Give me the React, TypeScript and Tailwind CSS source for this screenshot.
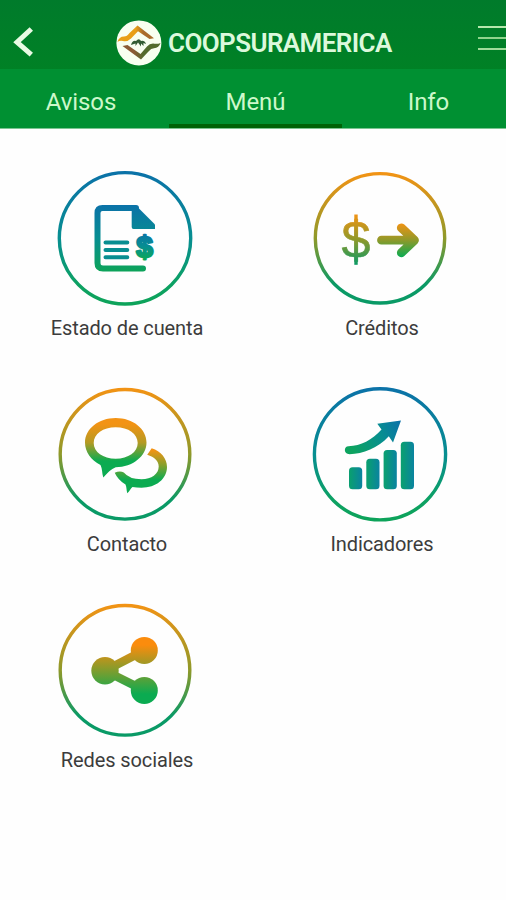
import type { ReactNode } from 'react'

const ORANGE = '#f39314'
const OLIVE = '#8f992a'
const GREEN = '#0bab51'
const BLUE = '#0b72a8'
const TEAL = '#078e91'

type RingProps = {
    id: string
    warm?: boolean
    r?: number
    children: ReactNode
}

const Ring = ({ id, warm = false, r = 65, children }: RingProps) => (
    <svg className="w-[136px] h-[136px] mr-1" viewBox="0 0 136 136" fill="none">
        <defs>
            <linearGradient id={id} gradientUnits="userSpaceOnUse" x1="0" y1="2" x2="0" y2="134">
                <stop offset="0" stopColor={warm ? ORANGE : BLUE} />
                <stop offset="0.5" stopColor={warm ? OLIVE : TEAL} />
                <stop offset="0.85" stopColor={warm ? '#0a9a66' : '#0da163'} />
                <stop offset="1" stopColor={warm ? '#0a9a66' : '#0da35a'} />
            </linearGradient>
        </defs>
        <circle cx="68" cy="68.3" r={r} stroke={`url(#${id})`} strokeWidth="3.4" />
        {children}
    </svg>
)

type FadeProps = { id: string; from: string; mid: string; to: string; y1: number; y2: number }

const Fade = ({ id, from, mid, to, y1, y2 }: FadeProps) => (
    <linearGradient id={id} gradientUnits="userSpaceOnUse" x1="0" y1={y1} x2="0" y2={y2}>
        <stop offset="0" stopColor={from} />
        <stop offset="0.5" stopColor={mid} />
        <stop offset="1" stopColor={to} />
    </linearGradient>
)

const AccountIcon = () => (
    <Ring id="ring-account" r={65.7}>
        <Fade id="doc" from={BLUE} mid={TEAL} to="#0da35a" y1={35} y2={101} />
        <Fade id="doc-cash" from={BLUE} mid={TEAL} to={GREEN} y1={62} y2={91} />
        <path
            d="M79 38H45.500Q40.500 38 40.500 43V93Q40.500 98.500 46 98.500H86"
            stroke="url(#doc)"
            strokeWidth="6"
            strokeLinecap="round"
        />
        <path d="M74.700 35H78.500L98 54.500V59H76.500Q74.700 59 74.700 57Z" fill="url(#doc)" />
        <path d="M48.500 72.500H70.300M48.500 79.900H70.300M48.500 87.200H70.300" stroke={TEAL} strokeWidth="4" strokeLinecap="round" />
        <text
            x="87.500"
            y="86.700"
            textAnchor="middle"
            className="font-['Liberation_Sans',sans-serif] font-bold text-[30px]"
            fill="url(#doc-cash)"
            stroke="url(#doc-cash)"
            strokeWidth="2.400"
            strokeLinejoin="round"
        >
            $
        </text>
    </Ring>
)

const CreditIcon = () => (
    <Ring id="ring-credit" warm r={64.7}>
        <Fade id="credit-cash" from={ORANGE} mid={OLIVE} to="#0a9a66" y1={44} y2={95} />
        <Fade id="credit-arrow" from={ORANGE} mid={OLIVE} to={GREEN} y1={53} y2={87} />
        <text
            x="44"
            y="87.500"
            textAnchor="middle"
            className="font-['Liberation_Sans',sans-serif] text-[52px]"
            fill="url(#credit-cash)"
            stroke="url(#credit-cash)"
            strokeWidth="0.600"
        >
            $
        </text>
        <path d="M44 44.500V94.800" stroke="url(#credit-cash)" strokeWidth="3.400" />
        <path
            d="M69.500 70.200H98M89.300 57.800L102.500 70.200L89.300 82.800"
            stroke="url(#credit-arrow)"
            strokeWidth="8.800"
            strokeLinecap="round"
            strokeLinejoin="round"
        />
    </Ring>
)

const ContactIcon = () => (
    <Ring id="ring-contact" warm r={64.8}>
        <Fade id="bubble-big" from={ORANGE} mid="#b59a23" to={GREEN} y1={38} y2={75} />
        <Fade id="bubble-small" from={ORANGE} mid="#87a02c" to={GREEN} y1={64} y2={94} />
        <path
            fillRule="evenodd"
            fill="url(#bubble-big)"
            d="M58.700 32C76 32 89.500 43 89.500 56.500S76 81 58.700 81.300C54 83 50.500 87 46.300 91.500C44.800 87 45.500 83 43.500 79C34 74 28 66 28 56.500C28 43 41.500 32 58.700 32ZM58.700 41.300C46 41.300 36.700 48 36.700 57S46 72.700 58.700 72.700S80.700 66 80.700 57S71.500 41.300 58.700 41.300Z"
        />
        <path
            fill="url(#bubble-small)"
            d="M94.700 62.300C104 65.500 110 72.500 110 81C110 93 99 101.700 84.500 101.700Q79.500 101.700 75.500 101C73.500 102.500 73 105 70.300 107.200C69.300 104 69.700 101 68.500 98.500Q61 94 57.700 86.700Q63 84.500 66.800 86.500Q72.500 93.300 84.500 93.300C94.500 93.300 101.700 88 101.700 80.500C101.700 75 97.500 71.300 90.200 68.800Z"
        />
    </Ring>
)

const BARS = [
    { x: 37, top: 81.3 },
    { x: 54.3, top: 72.7 },
    { x: 71.6, top: 64 },
    { x: 88.8, top: 55.7 },
]

const IndicatorsIcon = () => (
    <Ring id="ring-indicators" r={65.6}>
        <linearGradient id="bar" x1="0" y1="0" x2="1" y2="0">
            <stop offset="0.1" stopColor="#0a9e72" />
            <stop offset="1" stopColor="#0a83a0" />
        </linearGradient>
        <linearGradient id="trend" gradientUnits="userSpaceOnUse" x1="38" y1="60" x2="88" y2="36">
            <stop offset="0" stopColor="#0da35f" />
            <stop offset="0.6" stopColor="#078e91" />
            <stop offset="1" stopColor={BLUE} />
        </linearGradient>
        {BARS.map((bar) => (
            <rect key={bar.x} x={bar.x} y={bar.top} width="13.200" height={103.300 - bar.top} rx="3.500" fill="url(#bar)" />
        ))}
        <path
            fill="url(#trend)"
            d="M36.500 60.200C49 60 60 54 69.500 43.500L65.300 37.800L89 34.500L81 56.500L76.800 50.300C66 62 51 68.200 37.500 68.200C31.500 68 31.500 60.200 36.500 60.200Z"
        />
    </Ring>
)

const ShareIcon = () => (
    <Ring id="ring-share" warm r={64.8}>
        <Fade id="share" from="#fb8c0d" mid="#849c2c" to={GREEN} y1={43} y2={92} />
        <g fill="url(#share)">
            <circle cx="87.300" cy="48.400" r="13.500" />
            <circle cx="48" cy="68.700" r="13.700" />
            <circle cx="87.300" cy="88.400" r="13.500" />
        </g>
        <path d="M87.300 48.400L48 68.700L87.300 88.400" stroke="url(#share)" strokeWidth="8.500" />
    </Ring>
)

const Logo = () => (
    <svg className="w-[46px] h-[46px] shrink-0" viewBox="0 0 46 46">
        <defs>
            <linearGradient id="logo-roof" x1="0" x2="1">
                <stop offset="0.5" stopColor="#e99f16" />
                <stop offset="0.7" stopColor="#a96b2b" />
            </linearGradient>
            <linearGradient id="logo-base" x1="0" x2="1">
                <stop offset="0.3" stopColor="#8b5b35" />
                <stop offset="0.55" stopColor="#526b2c" />
            </linearGradient>
        </defs>
        <circle cx="22.900" cy="22.900" r="22.500" fill="#f8fff0" />
        <path d="M1.500 22Q3 16.500 8 16.500Q11 16.500 13.500 13L21.500 5.500L38 18.200L33.500 19L22 11.200L15 18.500Q11.500 22 7 21Q3.500 20.300 1.500 22Z" fill="url(#logo-roof)" />
        <path d="M44.500 23Q43 28 38 28.200Q35 28.200 32.500 31.500L25 39.500L6.500 26L11.500 25L24.500 34L31 26.500Q34 23 38.500 23.700Q41.500 24.200 44.500 23Z" fill="url(#logo-base)" />
        <path d="M15 25Q16.500 20 20 21Q23 17.500 25 21Q28.500 20 30 24L27.500 23V26L25 23.500V26.500L22 22.500L19.500 26V23.500Z" fill="#315c32" />
    </svg>
)

const TABS = [
    { name: 'Avisos', style: 'border-transparent pr-[7px]' },
    { name: 'Menú', style: 'border-[#006307]' },
    { name: 'Info', style: 'border-transparent' },
]

const MENU = [
    { label: 'Estado de cuenta', Icon: AccountIcon },
    { label: 'Créditos', Icon: CreditIcon },
    { label: 'Contacto', Icon: ContactIcon },
    { label: 'Indicadores', Icon: IndicatorsIcon },
    { label: 'Redes sociales', Icon: ShareIcon },
]

const Header = () => (
    <header className="flex h-[69px] items-start bg-gradient-to-b from-[#007b2b] to-[#008125] pt-5">
        <button className="mt-[6px] ml-[13px] w-[22px]" aria-label="Volver">
            <svg className="w-[22px] h-8" viewBox="0 0 22 32" fill="none">
                <path d="M18.300 3L4 16.200L18.300 28.700" stroke="#e9fbe4" strokeWidth="5" />
            </svg>
        </button>
        <div className="ml-[81px] flex items-center">
            <Logo />
            <h1 className="ml-[6px] w-[230px] whitespace-nowrap text-[26px] leading-[46px] font-semibold tracking-[-0.6px] text-[#dcf9dc]">
                COOPSURAMERICA
            </h1>
        </div>
        <div className="mt-[6px] ml-auto flex w-7 flex-col gap-[9px]">
            <span className="h-[2px] bg-[#b5e8ad]" />
            <span className="h-[2px] bg-[#8fd48c]" />
            <span className="h-[2px] bg-[#a0dc9a]" />
        </div>
    </header>
)

export default function App() {
    return (
        <div className="h-[900px] w-full overflow-hidden bg-[#fefefe] font-['Roboto',sans-serif]">
            <Header />
            <nav className="grid h-[60px] grid-cols-[169px_173px_173px] overflow-hidden border-b border-[#7cc592] bg-[#009032]">
                {TABS.map(({ name, style }) => (
                    <button
                        key={name}
                        className={`flex justify-center border-b-4 pt-[17px] text-[24px] leading-8 tracking-[-0.1px] text-[#cdf8cb] ${style}`}
                    >
                        {name}
                    </button>
                ))}
            </nav>
            <main className="grid grid-cols-[254px_256px] pt-[41px]">
                {MENU.map(({ label, Icon }) => (
                    <div key={label} className="flex h-[216px] flex-col items-center">
                        <Icon />
                        <span className="mt-2 text-[20px] leading-7 tracking-[-0.1px] text-[#3c3c3c]">{label}</span>
                    </div>
                ))}
            </main>
        </div>
    )
}
